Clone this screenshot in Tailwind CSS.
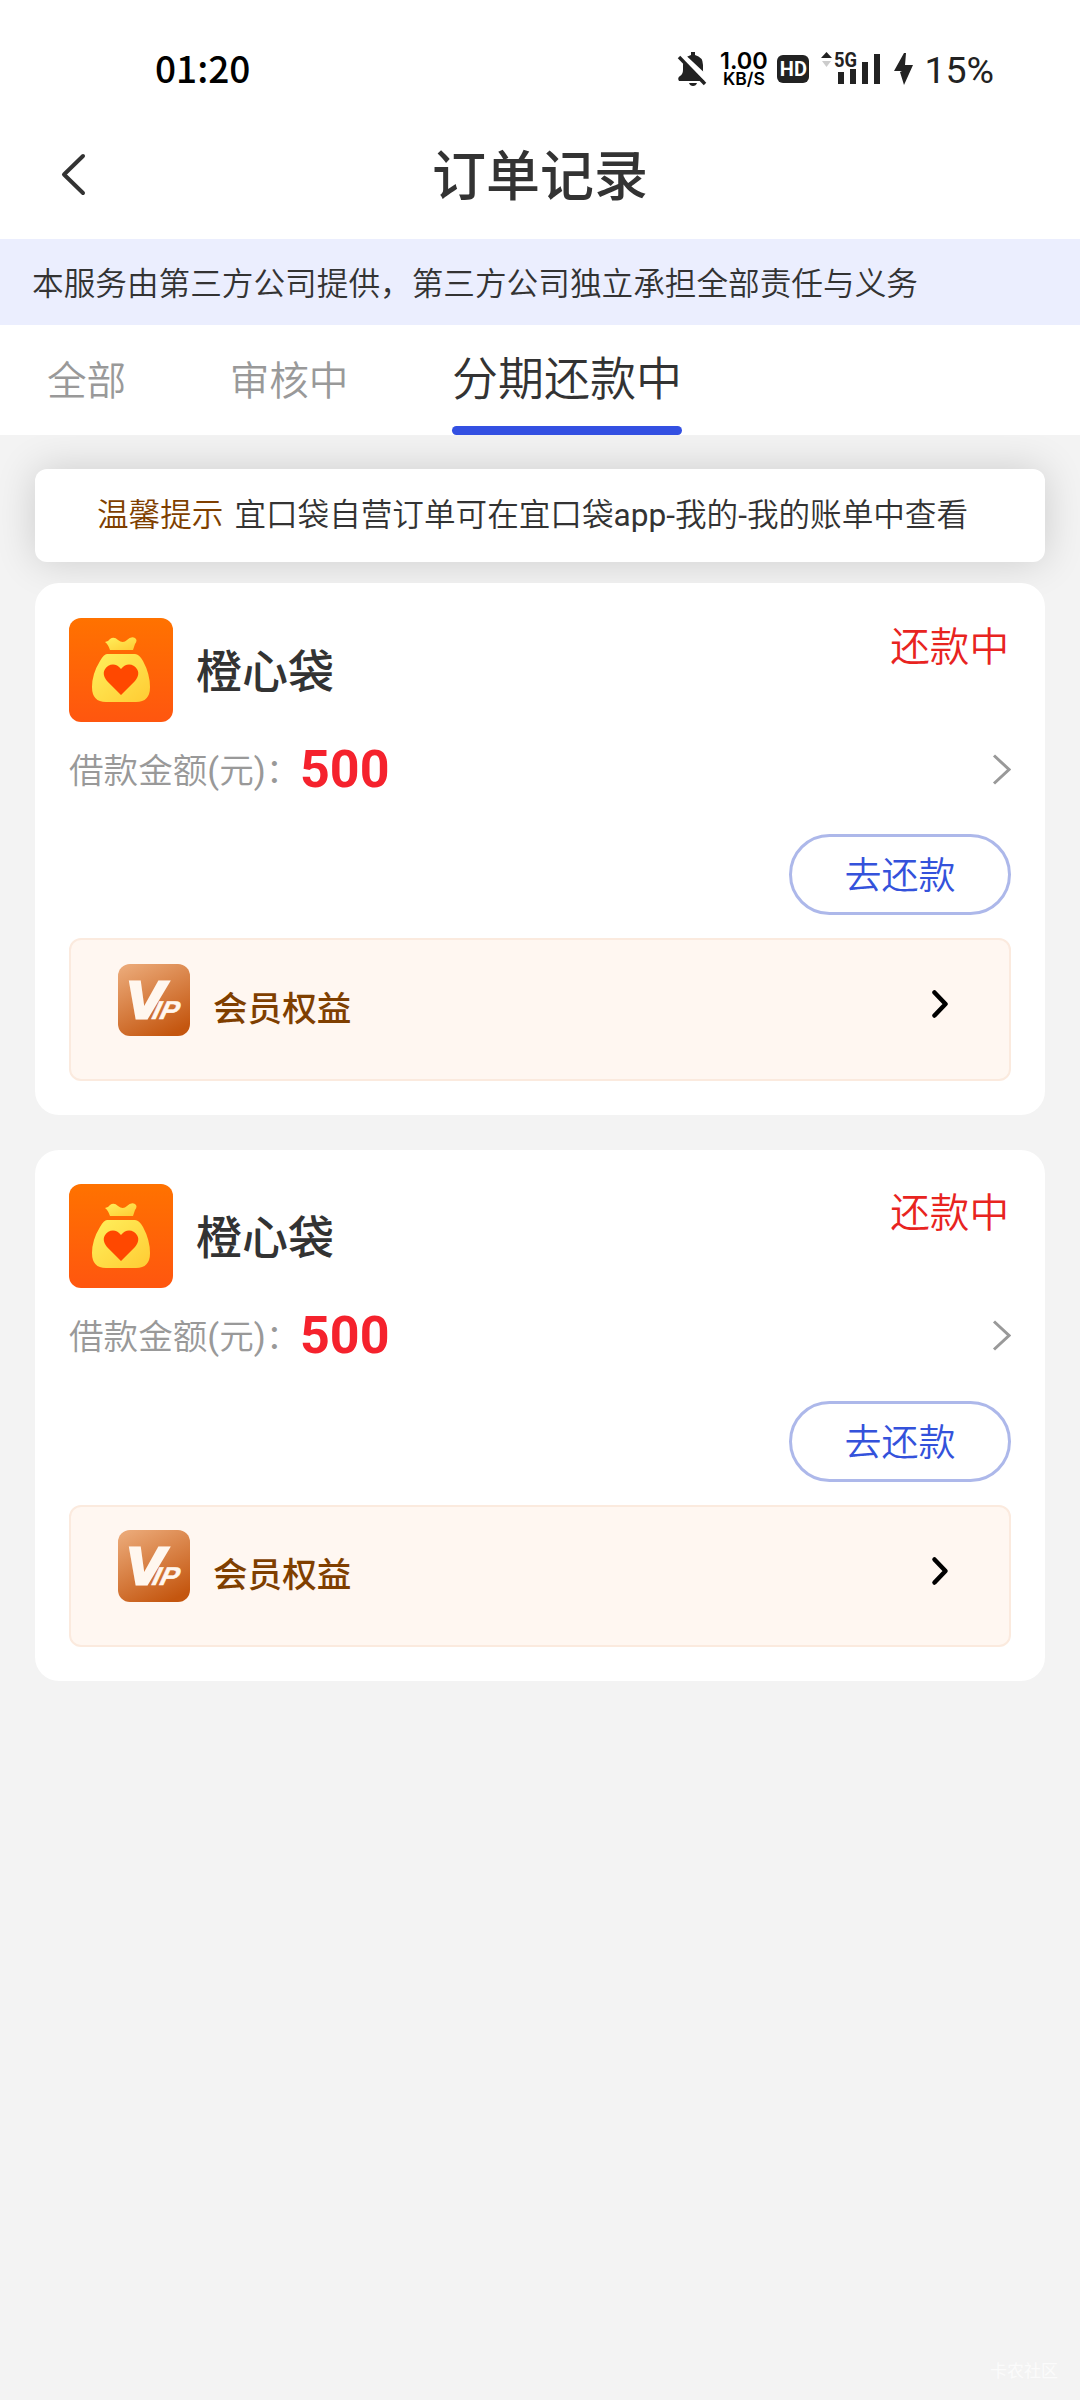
<!DOCTYPE html>
<html lang="zh-CN">
<head>
<meta charset="utf-8">
<title>订单记录</title>
<script src="https://cdn.jsdelivr.net/npm/@tailwindcss/browser@4"></script>
</head>
<body class="bg-[#f3f3f3] font-['Noto_Sans_CJK_SC',sans-serif] font-[350] text-[#333] leading-none">
<svg class="absolute size-0">
  <defs>
    <linearGradient id="orange" x1="0" y1="0" x2="0" y2="1"><stop offset="0" stop-color="#ff7200"/><stop offset="1" stop-color="#ff560f"/></linearGradient>
    <linearGradient id="gold" x1="0" y1="0" x2="1" y2="1"><stop offset="0" stop-color="#fff05c"/><stop offset="1" stop-color="#ffcb33"/></linearGradient>
    <linearGradient id="bronze" x1="0.2" y1="0" x2="0.7" y2="1"><stop offset="0" stop-color="#eaa775"/><stop offset="1" stop-color="#c4560f"/></linearGradient>
  </defs>
  <symbol id="bag" viewBox="0 0 104 104">
    <rect width="104" height="104" rx="12" fill="url(#orange)"/>
    <path d="M36 24Q39 24 41 21Q45 18 49 22Q54 26 58 22Q62 18 66 20Q69 22 66 26L64 32H41Q39 26 36 24Z" fill="url(#gold)"/>
    <path d="M38 36H66Q70 36 74 43Q81 56 81 69Q81 84 67 84H37Q23 84 23 69Q23 56 31 43Q35 36 38 36Z" fill="url(#gold)"/>
    <path d="M52 77L38 63Q31 54 39 48Q46 44 52 51Q58 44 65 48Q73 54 66 63Z" fill="#ff4800"/>
  </symbol>
  <symbol id="vip" viewBox="0 0 72 72">
    <rect width="72" height="72" rx="12" fill="url(#bronze)"/>
    <g fill="#fff7ef" font-family="Liberation Sans" font-weight="700" font-style="italic" stroke="#fff7ef">
      <text x="8" y="54" font-size="52" textLength="38" lengthAdjust="spacingAndGlyphs" stroke-width="3">V</text>
      <text transform="translate(33 55) skewX(-14)" font-size="26" textLength="26" lengthAdjust="spacingAndGlyphs" stroke-width="0.500">IP</text>
    </g>
  </symbol>
</svg>

<header class="bg-white">
  <div class="flex h-[138px] items-center pl-[155px] pr-[86px]">
    <span class="pb-[4px] text-[37px] font-medium text-black">01:20</span>
    <div class="ml-auto flex items-center text-[#222]">
      <svg class="h-[36px] w-[32px]" viewBox="0 0 32 36"><path d="M14 1H18V4Q26 6 26 14V20Q26 23 30 25Q31 27 30 30H2Q0 27 3 25Q6 23 6 19V14Q6 6 14 4ZM12 32H20Q19 35 16 35Q13 35 12 32Z" fill="#222"/><path d="M3 3L33 31" stroke="#fff" stroke-width="6"/><path d="M2 6L28 33" stroke="#222" stroke-width="3.4"/></svg>
      <div class="ml-[10px] flex w-[49px] flex-col items-center text-black"><span class="font-['Inter',sans-serif] text-[23.5px] leading-[20px] font-semibold">1.00</span><span class="font-['Inter',sans-serif] text-[17.5px] leading-[16px] font-semibold">KB/S</span></div>
      <div class="ml-[9px] flex h-[28px] w-[32px] items-center justify-center rounded-[6px] bg-[#222] font-['Roboto',sans-serif] text-[20px] font-bold text-white">HD</div>
      <svg class="ml-[11px] h-[34px] w-[62px] overflow-visible" viewBox="0 0 62 34"><path d="M1 6L6.500 0L12 6Z" fill="#222"/><path d="M2 9H11L6.500 15Z" fill="#ccc"/><path d="M18 20h6v12h-6zM30 17h6v15h-6zM42 10h6v22h-6zM54 2h6v30h-6z" fill="#222"/><text x="14" y="14.500" font-family="Roboto" font-weight="700" font-size="20" textLength="23" lengthAdjust="spacingAndGlyphs" fill="#222" stroke="#fff" stroke-width="3" paint-order="stroke">5G</text></svg>
      <svg class="ml-[12px] h-[32px] w-[19px]" viewBox="0 0 19 32"><path d="M10 0L0 18H8L6 19L10 32L19 12H11L12 0Z" fill="#222"/></svg>
      <span class="ml-[11px] pt-[4px] font-['Roboto',sans-serif] text-[37.5px] font-normal">15%</span>
    </div>
  </div>
  <div class="grid h-[101px] grid-cols-3 items-center pb-[29px]">
    <svg class="ml-[59px] h-[46px] w-[30px]" viewBox="0 0 30 46"><path d="M24 5L5 23.500L24 42" fill="none" stroke="#333" stroke-width="4" stroke-linecap="round" stroke-linejoin="round"/></svg>
    <h1 class="pb-[3px] text-center text-[54px] font-medium">订单记录</h1>
  </div>
</header>

<div class="flex h-[86px] items-center bg-[#ebeefe] pl-[32px] text-[31.65px]">本服务由第三方公司提供，第三方公司独立承担全部责任与义务</div>

<nav class="relative z-10 flex h-[110px] items-stretch gap-[103.500px] bg-white pl-[47px] text-[39.6px] text-[#999]">
  <div class="flex items-center pb-[4px]">全部</div>
  <div class="flex items-center pb-[4px]">审核中</div>
  <div class="flex flex-col justify-between text-[46px] text-[#333]"><span class="pt-[27px]">分期还款中</span><span class="h-[9px] rounded-full bg-[#3350e2]"></span></div>
</nav>

<main class="flex flex-col px-[35px] pt-[34px]">
  <div class="flex h-[93px] items-center gap-[11px] rounded-[12px] bg-white pl-[62px] font-['Roboto','Noto_Sans_CJK_SC',sans-serif] text-[31.6px] shadow-[0_0_40px_rgba(0,0,0,0.16)]"><span class="text-[#7f3f00]">温馨提示</span><span>宜口袋自营订单可在宜口袋<span class="font-normal">app-</span>我的<span class="font-normal">-</span>我的账单中查看</span></div>

  <section class="relative mt-[21px] flex h-[532px] flex-col rounded-[24px] bg-white px-[34px] pt-[35px]">
    <div class="flex h-[104px] items-center">
      <svg class="size-[104px]"><use href="#bag"/></svg>
      <h2 class="ml-[23px] pb-[4px] text-[46px] font-medium">橙心袋</h2>
      <span class="ml-auto self-start pt-[6px] pr-[2px] text-[39.6px] text-[#e8241f]">还款中</span>
    </div>
    <div class="flex h-[94px] items-center">
      <span class="w-[231px] pt-[4px] font-['Roboto','Noto_Sans_CJK_SC',sans-serif] text-[34.6px] whitespace-nowrap text-[#999]">借款金额<span class="font-normal">(</span>元<span class="font-normal">)</span>：</span>
      <span class="pt-[2px] font-['Roboto',sans-serif] text-[52px] font-bold text-[#f5222d]">500</span>
      <svg class="ml-auto h-[32px] w-[20px]" viewBox="0 0 20 32"><path d="M3 2.500L18 16.500L3 30.500" fill="none" stroke="#999" stroke-width="3"/></svg>
    </div>
    <button class="mt-[18px] flex h-[81px] w-[222px] items-center justify-center self-end rounded-full border-[3px] border-[#adb8ea] pb-[3px] text-[37px] text-[#3452db]">去还款</button>
    <div class="mt-[23px] flex h-[143px] rounded-[12px] border-2 border-[#fbeade] bg-[#fff7f1] px-[47px] pt-[24px]">
      <svg class="size-[72px]"><use href="#vip"/></svg>
      <span class="ml-[23px] pt-[25px] text-[34.6px] font-medium text-[#7f3f00]">会员权益</span>
      <svg class="mt-[24px] mr-[12px] ml-auto h-[32px] w-[20px]" viewBox="0 0 20 32"><path d="M4.500 4.500L15.500 16L4.500 27.500" fill="none" stroke="#000" stroke-width="4.500" stroke-linecap="round" stroke-linejoin="round"/></svg>
    </div>
  </section>

  <section class="relative mt-[35px] flex h-[531px] flex-col rounded-[24px] bg-white px-[34px] pt-[34px]">
    <div class="flex h-[104px] items-center">
      <svg class="size-[104px]"><use href="#bag"/></svg>
      <h2 class="ml-[23px] pb-[4px] text-[46px] font-medium">橙心袋</h2>
      <span class="ml-auto self-start pt-[6px] pr-[2px] text-[39.6px] text-[#e8241f]">还款中</span>
    </div>
    <div class="flex h-[94px] items-center">
      <span class="w-[231px] pt-[4px] font-['Roboto','Noto_Sans_CJK_SC',sans-serif] text-[34.6px] whitespace-nowrap text-[#999]">借款金额<span class="font-normal">(</span>元<span class="font-normal">)</span>：</span>
      <span class="pt-[2px] font-['Roboto',sans-serif] text-[52px] font-bold text-[#f5222d]">500</span>
      <svg class="ml-auto h-[32px] w-[20px]" viewBox="0 0 20 32"><path d="M3 2.500L18 16.500L3 30.500" fill="none" stroke="#999" stroke-width="3"/></svg>
    </div>
    <button class="mt-[19px] flex h-[81px] w-[222px] items-center justify-center self-end rounded-full border-[3px] border-[#adb8ea] pb-[3px] text-[37px] text-[#3452db]">去还款</button>
    <div class="mt-[23px] flex h-[142px] rounded-[12px] border-2 border-[#fbeade] bg-[#fff7f1] px-[47px] pt-[23px]">
      <svg class="size-[72px]"><use href="#vip"/></svg>
      <span class="ml-[23px] pt-[25px] text-[34.6px] font-medium text-[#7f3f00]">会员权益</span>
      <svg class="mt-[25px] mr-[12px] ml-auto h-[32px] w-[20px]" viewBox="0 0 20 32"><path d="M4.500 4.500L15.500 16L4.500 27.500" fill="none" stroke="#000" stroke-width="4.500" stroke-linecap="round" stroke-linejoin="round"/></svg>
    </div>
  </section>
</main>
<div class="absolute top-[2361px] right-[22px] text-[17px] font-normal text-white/70">卡农社区</div>
</body>
</html>
